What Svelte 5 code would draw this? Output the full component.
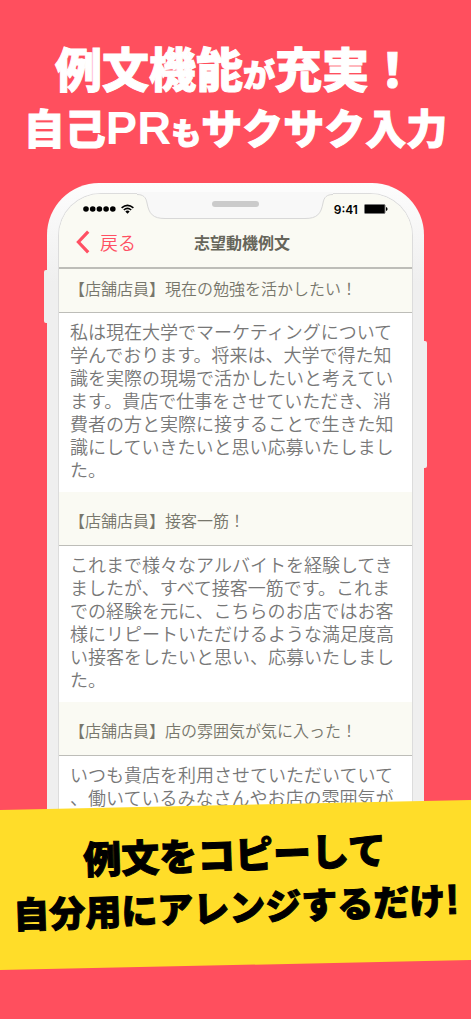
<script>
    const examples = [
        {
            title: '【店舗店員】現在の勉強を活かしたい！',
            text: '私は現在大学でマーケティングについて学んでおります。将来は、大学で得た知識を実際の現場で活かしたいと考えています。貴店で仕事をさせていただき、消費者の方と実際に接することで生きた知識にしていきたいと思い応募いたしました。'
        },
        {
            title: '【店舗店員】接客一筋！',
            text: 'これまで様々なアルバイトを経験してきましたが、すべて接客一筋です。これまでの経験を元に、こちらのお店ではお客様にリピートいただけるような満足度高い接客をしたいと思い、応募いたしました。'
        },
        {
            title: '【店舗店員】店の雰囲気が気に入った！',
            text: 'いつも貴店を利用させていただいていて、働いているみなさんやお店の雰囲気が'
        }
    ];
</script>

<main class="page">
    <h1 class="headline">
        <span class="line big">例文機能<small>が</small>充実！</span>
        <span class="line">自己<span class="latin">PR</span><small>も</small>サクサク入力</span>
    </h1>

    <div class="phone">
        <span class="side left"></span>
        <span class="side right"></span>
        <div class="screen">
            <div class="status">
                <svg width="52" height="12" viewBox="0 0 52 12" aria-hidden="true">
                    <circle cx="3" cy="6" r="2.8" />
                    <circle cx="9.7" cy="6" r="2.8" />
                    <circle cx="16.4" cy="6" r="2.8" />
                    <circle cx="23.1" cy="6" r="2.8" />
                    <circle cx="29.8" cy="6" r="2.8" />
                    <g fill="none" stroke="#000" stroke-width="1.6">
                        <path d="M38.6 4.8Q44.5 -0.2 50.4 4.8" />
                        <path d="M40.8 7Q44.5 3.8 48.2 7" />
                    </g>
                    <path d="M42.3 8.4Q44.5 6.8 46.7 8.4L44.5 10.8Z" />
                </svg>
                <span class="clock">9:41</span>
                <svg width="24" height="10" viewBox="0 0 24 10" aria-hidden="true">
                    <rect x="0.5" y="0.5" width="20.5" height="9" rx="1" fill="#000" stroke="#777" />
                    <path d="M22 3Q23.6 3.4 23.6 5T22 7Z" />
                </svg>
            </div>
            <header class="nav">
                <button type="button" class="back">
                    <svg width="14" height="24" viewBox="0 0 14 24" aria-hidden="true">
                        <path d="M12.2 1.6L2.4 12L12.2 22.4" fill="none" stroke="#ff5063" stroke-width="3.2" />
                    </svg>
                    戻る
                </button>
                <h2>志望動機例文</h2>
            </header>

            {#each examples as example}
            <section>
                <h3>{example.title}</h3>
                <p>{example.text}</p>
            </section>
            {/each}
        </div>
        <svg class="notch" width="196" height="28" viewBox="0 0 196 28" aria-hidden="true">
            <path d="M0 0V2.5C6 2.5 9 5 10 11C12 22 16 26.5 28 26.5H168C180 26.5 184 22 186 11C187 5 190 2.5 196 2.5V0Z" fill="#f8f8f8" />
            <path d="M0 2.5C6 2.5 9 5 10 11C12 22 16 26.5 28 26.5H168C180 26.5 184 22 186 11C187 5 190 2.5 196 2.5" fill="none" stroke="#d8d8d8" />
            <rect x="75" y="9" width="47" height="6" rx="3" fill="#cbcbcb" />
        </svg>
    </div>

    <div class="banner">
        <p>
            <span class="line">例文をコピーして</span>
            <span class="line second">自分用にアレンジするだけ<span class="latin">!</span></span>
        </p>
    </div>
</main>

<style>
    :global(body) {
        background-color: #ff4f5e;
    }
    .page {
        min-height: 100vh;
        box-sizing: border-box;
        padding: 40px 0 54px;
        overflow: hidden;
        background-color: #ff4f5e;
        font-family: "Noto Sans CJK JP", sans-serif;
    }
    h1, h2, h3, p {
        margin: 0;
    }
    .line {
        display: block;
        white-space: nowrap;
    }
    .latin {
        font-family: "Liberation Sans", sans-serif;
    }
    .headline {
        display: flex;
        flex-direction: column;
        align-items: center;
        height: 143px;
        color: #fff;
        font-size: 41px;
        font-weight: 900;
        line-height: 53px;
        -webkit-text-stroke: 1px #fff;
    }
    .headline .big {
        font-size: 47px;
    }
    .headline small {
        font-size: 32px;
    }
    .headline .line:not(.big) small {
        font-size: 30px;
    }
    .headline .latin {
        font-size: 47px;
        line-height: 47px;
        -webkit-text-stroke: 0;
    }
    .phone {
        position: relative;
        width: 80%;
        box-sizing: border-box;
        margin: 0 auto;
        padding: 11px 12px 0;
        border-radius: 52px 52px 0 0;
        background: linear-gradient(#fdfdfd, #efefef 100px);
    }
    .side {
        position: absolute;
        width: 4px;
        background-color: #efefef;
    }
    .side.left {
        top: 87px;
        left: -3px;
        height: 53px;
        border-radius: 2px 0 0 2px;
    }
    .side.right {
        top: 158px;
        right: -3px;
        height: 127px;
        border-radius: 0 2px 2px 0;
    }
    .notch {
        position: absolute;
        top: 9px;
        left: 50%;
        margin-left: -98px;
    }
    .screen {
        overflow: hidden;
        border-radius: 42px 42px 0 0;
        box-shadow: 0 0 0 1px #dcdcdc;
        background-color: #fff;
    }
    .status {
        display: flex;
        align-items: center;
        height: 30px;
        padding: 0 24px;
        background-color: #fafaf3;
    }
    .clock {
        margin-left: auto;
        padding-right: 6px;
        font-family: Inter, sans-serif;
        font-size: 12px;
        font-weight: 600;
    }
    .nav {
        display: grid;
        grid-template-columns: 1fr auto 1fr;
        align-items: center;
        height: 35px;
        padding: 0 4px 8px 17px;
        border-bottom: 2px solid #bdbdb8;
        background-color: #fafaf3;
    }
    .back {
        display: flex;
        align-items: center;
        gap: 10px;
        justify-self: start;
        padding: 0;
        border: 0;
        background: none;
        color: #ff5063;
        font-family: inherit;
        font-size: 18px;
        font-weight: 350;
        line-height: 24px;
        cursor: pointer;
    }
    h2 {
        grid-column: 2;
        color: #66655a;
        font-size: 16px;
        font-weight: 700;
        line-height: 24px;
    }
    h3 {
        padding: 16px 10px 13px;
        border-bottom: 1px solid #bdbdb8;
        background-color: #fafaf3;
        color: #77766b;
        font-size: 16px;
        font-weight: 350;
        line-height: 24px;
    }
    .nav + section h3 {
        padding: 7px 10px 12px;
    }
    section p {
        padding: 7px 11px 11px;
        color: #777;
        font-size: 18px;
        font-weight: 350;
        line-height: 23px;
        line-break: anywhere;
    }
    .banner {
        position: relative;
        margin: -15px -12px 0;
        padding: 22px 0 34px;
        background-color: #ffdd29;
        transform: rotate(-1.2deg);
    }
    .banner p {
        display: flex;
        flex-direction: column;
        align-items: center;
        color: #000;
        font-size: 38px;
        font-weight: 900;
        line-height: 52px;
        transform: rotate(-0.7deg);
        -webkit-text-stroke: 1px #000;
    }
    .banner .second {
        font-size: 36px;
    }
    .banner .latin {
        font-size: 42px;
        line-height: 36px;
    }
</style>
